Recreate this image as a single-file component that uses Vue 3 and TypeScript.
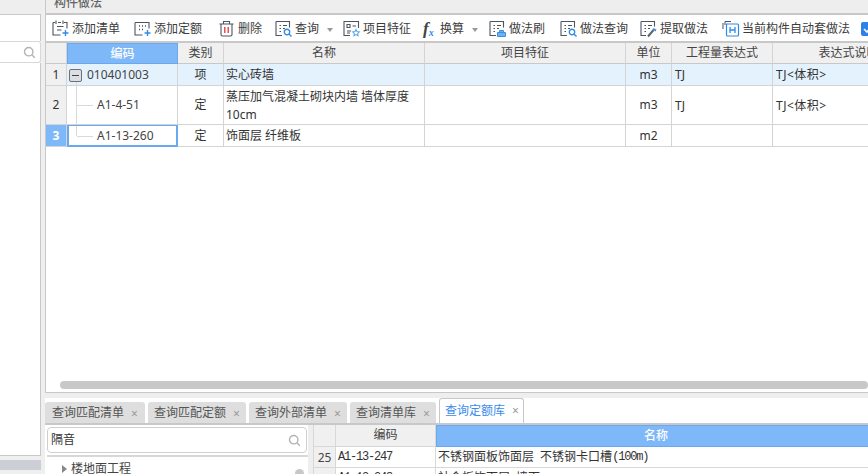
<script setup lang="ts">
type Shape = { d: string; c?: string; fill?: string; w?: number }
type Tool = { label: string; shapes: Shape[]; caret?: boolean; fx?: boolean }

const ink = '#4d5561'
const blue = '#2f8bea'
const lines = 'M4.5 5.5H6M8 5.5H12M4.5 8.5H6M8 8.5H10M4.5 11.5H6'

const tools: Tool[] = [
  { label: '添加清单', shapes: [
    { d: 'M1 2.5H3M6 2.5H9M12 2.5H15V8.5M1 2.5V15H8.5', c: ink },
    { d: 'M4 0.5V4M11 0.5V4', c: ink },
    { d: 'M5 6.5H11.5M5 10H9.5', c: ink },
    { d: 'M10.5 13H16.5M13.5 10V16', c: blue, w: 1.4 },
  ] },
  { label: '添加定额', shapes: [
    { d: 'M1 2.5V15H8.5M1 2.5H15V8.5', c: ink },
    { d: 'M5 6H6M8 6H9M11 6H12M5 9.5H6M8 9.5H9', c: ink, w: 1.4 },
    { d: 'M10.5 13H16.5M13.5 10V16', c: blue, w: 1.4 },
  ] },
  { label: '删除', shapes: [
    { d: 'M1.5 4H15.5M5.5 4V1.5H11.5V4M3 4V14.5Q3 16 4.5 16H12.5Q14 16 14 14.5V4', c: ink },
    { d: 'M6.8 7V13M10.2 7V13', c: '#e0353a', w: 1.3 },
  ] },
  { label: '查询', caret: true, shapes: [
    { d: 'M1 1.5H14.5V7.5M1 1.5V15.5H7', c: ink },
    { d: lines, c: ink },
    { d: 'M12 9.3A2.7 2.7 0 1 0 12 14.7A2.7 2.7 0 1 0 12 9.3M14 14L16.5 16.5', c: blue, w: 1.4 },
  ] },
  { label: '项目特征', shapes: [
    { d: 'M7 15.5H1V1.5H15.5V8', c: ink },
    { d: 'M4 4.5H7V7.5H4ZM9.5 6H13M4 11H8M4 13H7', c: ink },
    { d: 'M13 9.5L14 11.5L16.3 11.8L14.7 13.4L15 15.7L13 14.6L11 15.7L11.3 13.4L9.7 11.8L12 11.5Z', c: '#5da7ee', w: 1.1 },
  ] },
  { label: '换算', caret: true, fx: true, shapes: [] },
  { label: '做法刷', shapes: [
    { d: 'M1 1.5H14.5V7.5M1 1.5V15.5H7', c: ink },
    { d: lines, c: ink },
    { d: 'M8.5 16.5H16.5V12.5H8.5ZM10.5 12.5V10.5H14.5V12.5', c: '#3a8fe6', fill: '#6fb0ee', w: 1 },
  ] },
  { label: '做法查询', shapes: [
    { d: 'M1 1.5H14.5V7.5M1 1.5V15.5H7', c: ink },
    { d: lines, c: ink },
    { d: 'M12 9.3A2.7 2.7 0 1 0 12 14.7A2.7 2.7 0 1 0 12 9.3M14 14L16.5 16.5', c: blue, w: 1.4 },
  ] },
  { label: '提取做法', shapes: [
    { d: 'M1 1.5H14.5V6.5M1 1.5V15.5H6', c: ink },
    { d: lines, c: ink },
    { d: 'M8 16.5L13.5 10', c: '#5a6370', w: 2 },
    { d: 'M13 9L16 10.5', c: '#4d8fd8', w: 2 },
  ] },
  { label: '当前构件自动套做法', shapes: [
    { d: 'M3 5V1.5H9M1 3V9', c: ink, w: 1 },
    { d: 'M4.5 4H15.5Q16.5 4 16.5 5V15Q16.5 16 15.5 16H5.5Q4.5 16 4.5 15Z', c: blue, w: 1.2 },
    { d: 'M8 7V13M13 7V13M8 10H13', c: blue, w: 1.3 },
  ] },
]

type Row = { no: string; code: string; kind: string; name: string; unit: string; expr: string; desc: string; cls: string }
const rows: Row[] = [
  { no: '1', code: '010401003', kind: '项', name: '实心砖墙', unit: 'm3', expr: 'TJ', desc: 'TJ<体积>', cls: 'r1' },
  { no: '2', code: 'A1-4-51', kind: '定', name: '蒸压加气混凝土砌块内墙 墙体厚度10cm', unit: 'm3', expr: 'TJ', desc: 'TJ<体积>', cls: 'r2' },
  { no: '3', code: 'A1-13-260', kind: '定', name: '饰面层 纤维板', unit: 'm2', expr: '', desc: '', cls: 'r3' },
]
const heads = ['编码', '类别', '名称', '项目特征', '单位', '工程量表达式', '表达式说明']
const tabs = ['查询匹配清单', '查询匹配定额', '查询外部清单', '查询清单库', '查询定额库']
</script>

<template>
  <div class="page">
    <aside class="side">
      <div class="side-top"></div>
      <div class="side-blank"></div>
      <div class="side-search">
        <svg class="lens" width="13" height="13" viewBox="0 0 13 13"><circle cx="5.7" cy="5.7" r="4.2" /><path d="M8.8 8.8L11.8 11.8" /></svg>
      </div>
      <div class="side-body"></div>
      <div class="side-bar"></div>
    </aside>

    <main class="main">
      <section class="work">
        <div class="title"><span>构件做法</span></div>
        <div class="toolbar">
          <div v-for="t in tools" :key="t.label" class="tool">
            <span v-if="t.fx" class="fx">f<sub>x</sub></span>
            <svg v-else class="tool-icon" width="18" height="18" viewBox="0 0 18 18">
              <path v-for="(s, i) in t.shapes" :key="i" :d="s.d" :stroke="s.c" :fill="s.fill || 'none'" :stroke-width="s.w || 1.1" />
            </svg>
            <span>{{ t.label }}</span>
            <i v-if="t.caret" class="caret"></i>
          </div>
          <div class="check">
            <svg width="14" height="14" viewBox="0 0 14 14"><rect width="14" height="14" rx="2" fill="#2f80e8" /><path d="M3 7L6 10L11 4" stroke="#fff" stroke-width="1.6" fill="none" /></svg>
          </div>
        </div>

        <div class="grid">
          <div class="cell head corner"></div>
          <div v-for="(h, i) in heads" :key="h" class="cell head" :class="{ picked: i === 0 }">{{ h }}</div>

          <template v-for="r in rows" :key="r.no">
            <div class="cell no" :class="[r.cls, { active: r.no === '3' }]">{{ r.no }}</div>
            <div class="cell code" :class="[r.cls, { editing: r.no === '3' }]">
              <template v-if="r.no === '1'"><i class="minus"></i><span>{{ r.code }}</span></template>
              <template v-else>
                <i class="stem" :class="{ last: r.no === '3' }"></i><i class="twig"></i>
                <span class="leaf">{{ r.code }}</span>
              </template>
            </div>
            <div class="cell center" :class="r.cls">{{ r.kind }}</div>
            <div class="cell left name" :class="r.cls">{{ r.name }}</div>
            <div class="cell" :class="r.cls"></div>
            <div class="cell center" :class="r.cls">{{ r.unit }}</div>
            <div class="cell left expr" :class="r.cls">{{ r.expr }}</div>
            <div class="cell left expr desc" :class="r.cls">{{ r.desc }}</div>
          </template>
        </div>

        <div class="hscroll"><div class="thumb"></div></div>
      </section>

      <div class="gap"></div>

      <nav class="tabs">
        <div v-for="(t, i) in tabs" :key="t" class="tab" :class="{ on: i === 4 }">
          <span>{{ t }}</span><em>×</em>
        </div>
      </nav>

      <section class="lower">
        <div class="tree">
          <div class="search">
            <span>隔音</span>
            <svg class="lens" width="13" height="13" viewBox="0 0 13 13"><circle cx="5.7" cy="5.7" r="4.2" /><path d="M8.8 8.8L11.8 11.8" /></svg>
          </div>
          <div class="node"><i class="tri"></i><span>楼地面工程</span><b class="dot"></b></div>
        </div>
        <div class="split"></div>
        <div class="lib">
          <div class="lc lh"></div>
          <div class="lc lh">编码</div>
          <div class="lc lh sel">名称</div>
          <div class="lc lh num">25</div>
          <div class="lc mono">A1-13-247</div>
          <div class="lc txt">不锈钢面板饰面层 不锈钢卡口槽<span class="mono-in">(100m)</span></div>
          <div class="lc lh num"></div>
          <div class="lc mono">A1-13-248</div>
          <div class="lc txt">社会板饰面层 墙面</div>
        </div>
      </section>
    </main>
  </div>
</template>

<style scoped>
.page {
  width: 868px;
  height: 474px;
  display: flex;
  overflow: hidden;
  background: #efefef;
  font: 12px/1.2 "Noto Sans", "Noto Sans CJK SC", sans-serif;
  color: #333;
}
.side { width: 41px; flex: none; display: flex; flex-direction: column; }
.side-top { height: 14px; background: #eee; border-bottom: 1px solid #c8c8c8; flex: none; }
.side-blank { height: 26px; flex: none; background: #fff; border-right: 1px solid #c8c8c8; }
.side-search { height: 22px; flex: none; background: #fff; border-top: 1px solid #d8d8d8; border-bottom: 1px solid #d8d8d8; border-right: 1px solid #d8d8d8; border-radius: 0 3px 3px 0; display: flex; align-items: center; justify-content: flex-end; padding-right: 4px; box-sizing: border-box; }
.side-body { height: 393px; flex: none; background: #fff; border-right: 1px solid #c8c8c8; border-bottom: 1px solid #c8c8c8; box-sizing: border-box; }
.side-bar { height: 10px; flex: none; background: #ccd0d6; margin-top: 4px; }
.lens { fill: none; stroke: #b4b4b4; stroke-width: 1.4; flex: none; }

.main { flex: 1; min-width: 0; margin-left: 4px; display: flex; flex-direction: column; }
.work { height: 393px; flex: none; background: #fff; border-left: 1px solid #c8c8c8; border-bottom: 1px solid #c8c8c8; box-sizing: border-box; display: flex; flex-direction: column; overflow: hidden; }
.title { height: 15px; flex: none; background: #eee; border-bottom: 2px solid #c8c8c8; box-sizing: border-box; color: #666; font-size: 12px; padding-left: 8px; line-height: 5px; overflow: hidden; }
.title span { font-weight: 500; }
.toolbar { height: 28px; flex: none; display: grid; grid-template-columns: 82px 84px 57px 68px 80px 66px 71px 80px 82px 139px 20px; padding: 3px 0 0 6px; border-bottom: 2px solid #c8c8c8; box-sizing: border-box; align-items: center; width: 900px; }
.tool { display: flex; align-items: center; gap: 2px; white-space: nowrap; color: #3c3c3c; }
.tool-icon { flex: none; margin-top: -2px; }
.fx { font: italic 700 17px/1 "Liberation Serif", serif; width: 15px; color: #444; white-space: nowrap; margin-top: -2px; }
.fx sub { font-size: 10px; color: #2f8bea; vertical-align: -2px; line-height: 0; }
.caret { width: 0; height: 0; border: 3px solid transparent; border-top: 4px solid #999; border-bottom: 0; margin-left: 6px; }
.check { display: flex; margin-top: -2px; }

.grid { display: grid; width: 900px; grid-template-columns: 21px 111px 46px 201px 201px 46px 101px 152px; grid-template-rows: 21px 22px 39px 22px; flex: none; }
.cell { border-right: 1px solid #d4d4d4; border-bottom: 1px solid #d4d4d4; box-sizing: border-box; display: flex; align-items: center; position: relative; min-width: 0; padding-top: 1px; }
.head { justify-content: center; background: #f0f0f0; border-bottom-color: #c8c8c8; color: #444; }
.head.picked { background: #7fb8f8; color: #fff; font-weight: 500; border: 1px solid #6aa9ef; }
.no { justify-content: center; background: #f0f0f0; }
.active { background: #7fb8f8; color: #fff; font-weight: 700; }
.center { justify-content: center; }
.left { padding-left: 2px; line-height: 18px; }
.expr { padding-left: 3px; }
.desc { letter-spacing: 0.5px; }
.name { padding-right: 10px; }
.r1:not(.no) { background: #e3f2fd; }
.code { color: #444; }
.code.r1 { padding-left: 1px; gap: 5px; }
.leaf { margin-left: 30px; }
.minus { width: 13px; height: 13px; flex: none; border: 1px solid #707070; border-radius: 2px; background: #dcdee2; box-sizing: border-box; position: relative; margin-left: 1px; }
.minus::after { content: ""; position: absolute; left: 2px; right: 2px; top: 5px; height: 1px; background: #444; }
.minus::before { content: ""; position: absolute; left: 6px; top: 100%; width: 1px; height: 4px; background: #d9d9d9; margin-top: 1px; }
.stem { position: absolute; left: 9px; top: 0; bottom: 0; width: 1px; background: #d9d9d9; }
.stem.last { bottom: 50%; }
.twig { position: absolute; left: 10px; top: 50%; width: 16px; height: 1px; background: #d9d9d9; }
.editing { border: 2px solid #6aa9ef; border-top-width: 1px; background: #fff; }
.editing .stem { left: 7px; }
.editing .twig { left: 8px; }
.editing .leaf { margin-left: 28px; }

.hscroll { flex: 1; display: flex; align-items: flex-end; padding: 0 0 3px 14px; }
.thumb { width: 850px; height: 8px; border-radius: 4px; background: #c8c8c8; }

.gap { height: 5px; flex: none; background: #eee; }
.tabs { height: 27px; flex: none; background: #fff; display: flex; align-items: flex-end; gap: 3px; border-bottom: 2px solid #c8c8c8; box-sizing: border-box; }
.tab { height: 21px; display: flex; align-items: center; gap: 7px; padding: 2px 7px 0 6px; background: #dedede; border-radius: 3px 3px 0 0; color: #555; white-space: nowrap; box-sizing: border-box; }
.tab:first-child { padding-left: 7px; width: 100px; }
.tab span { flex: none; }
.tab em { font-style: normal; color: #999; font-size: 12px; width: 6px; text-align: center; flex: none; line-height: 12px; }
.tab.on { background: #fff; color: #3a8bea; border: 1px solid #c4c9d0; border-bottom: 0; height: 25px; padding: 0 5px; width: 85px; }

.lower { flex: 1; display: flex; background: #fff; min-height: 0; overflow: hidden; }
.tree { width: 263px; flex: none; padding: 2px 0 0 2px; box-sizing: border-box; }
.search { height: 26px; border: 1px solid #cfcfcf; border-radius: 4px; display: flex; align-items: center; justify-content: space-between; padding: 1px 5px 0 3px; box-sizing: border-box; color: #333; margin-right: 1px; }
.node { display: flex; align-items: center; gap: 4px; padding: 2px 0 0 15px; margin-top: 2px; border-top: 2px solid #d8d8d8; height: 24px; box-sizing: border-box; color: #444; position: relative; }
.tri { width: 0; height: 0; border: 4px solid transparent; border-left: 5px solid #888; border-right: 0; }
.dot { position: absolute; right: 4px; top: 12px; width: 9px; height: 9px; border-radius: 50%; background: #c8c8c8; }
.split { width: 6px; flex: none; background: #eee; border-right: 1px solid #d8d8d8; box-sizing: border-box; }
.lib { flex: 1; display: grid; grid-template-columns: 22px 100px 440px; grid-template-rows: 22px 21px 21px; min-width: 0; }
.lc { border-right: 1px solid #d8d8d8; border-bottom: 1px solid #d8d8d8; box-sizing: border-box; display: flex; align-items: center; white-space: nowrap; color: #333; }
.lh { background: #f0f0f0; justify-content: center; color: #444; }
.sel { background: #7fb8f8; color: #fff; font-weight: 500; border: 1px solid #6aa9ef; }
.num { padding-top: 2px; }
.mono { font: 12px "Liberation Mono", "Noto Sans CJK SC", monospace; letter-spacing: -1.2px; padding-left: 2px; }
.txt { padding-left: 2px; word-spacing: 3px; }
.mono-in { font: 12px "Liberation Mono", monospace; letter-spacing: -1.2px; }
</style>
